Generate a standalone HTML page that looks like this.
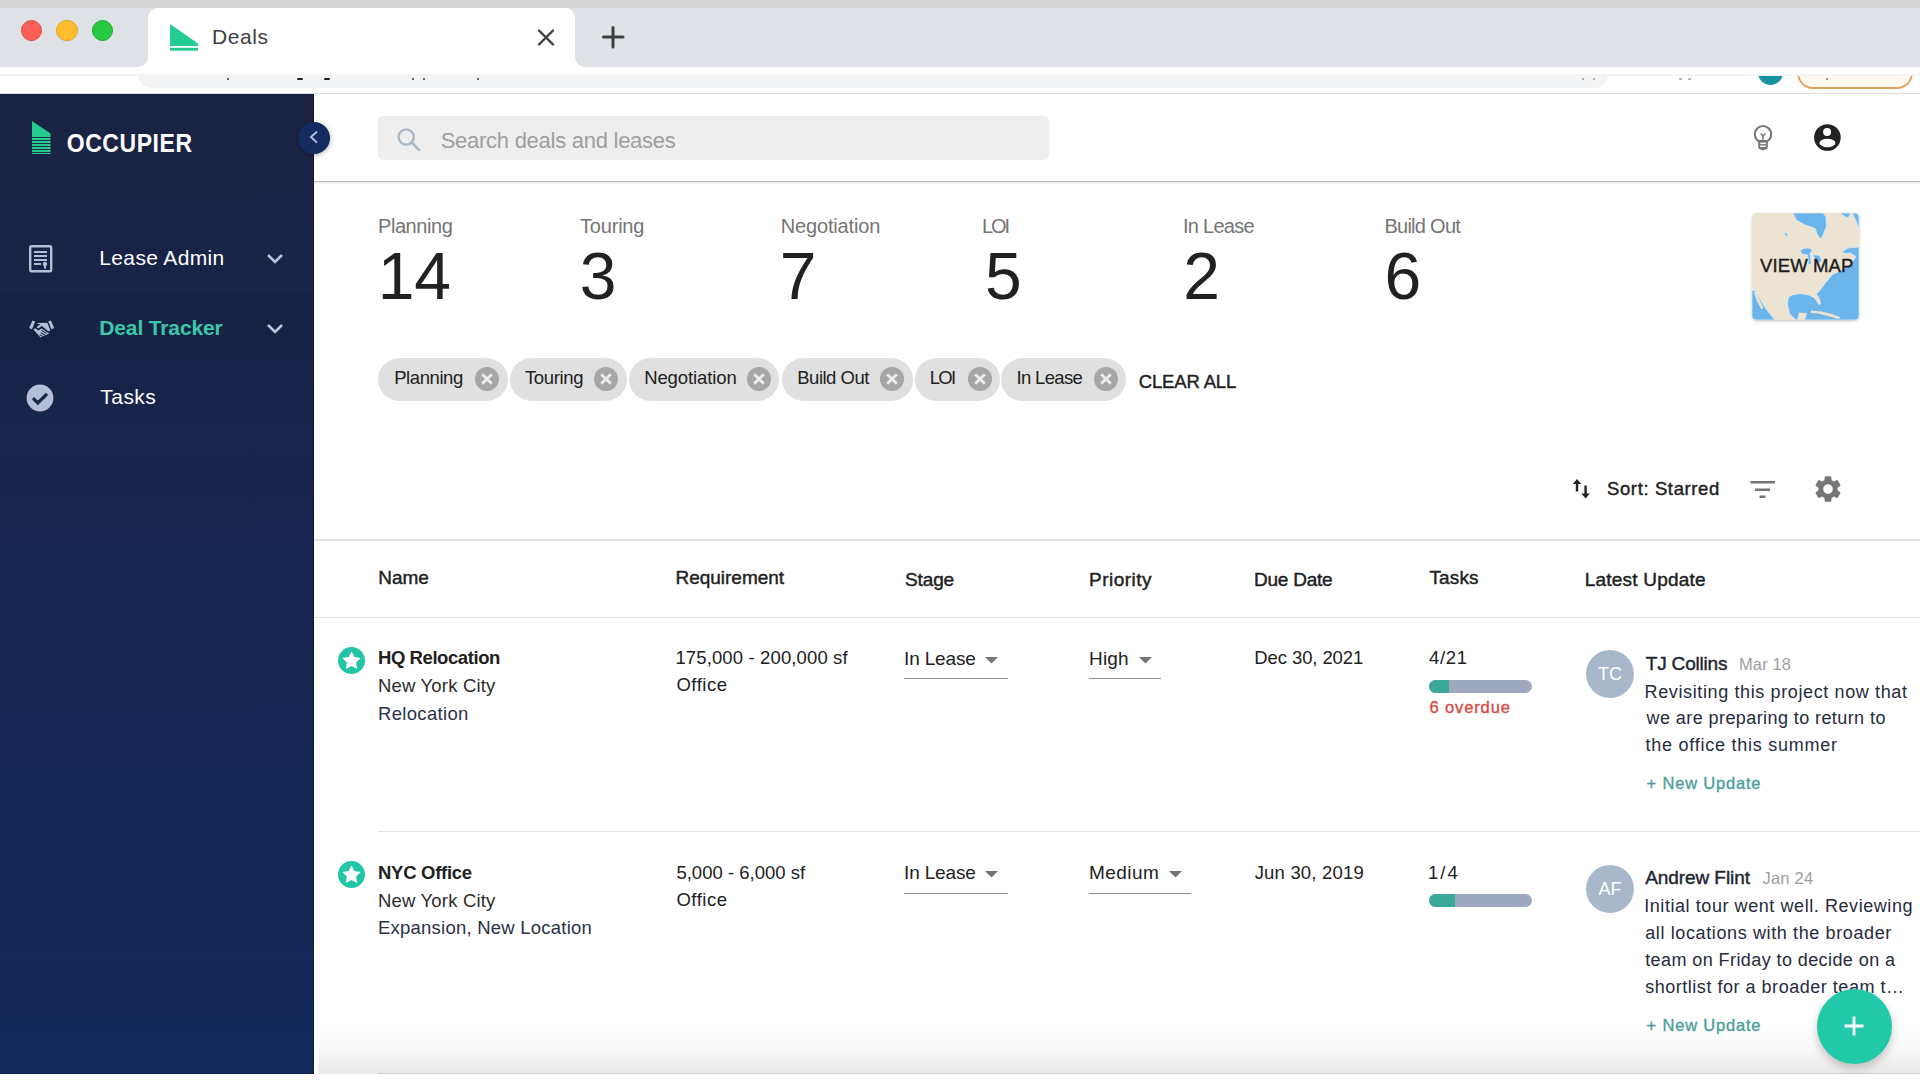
<!DOCTYPE html>
<html><head><meta charset="utf-8"><title>Deals</title>
<style>
html,body{margin:0;padding:0;width:1920px;height:1080px;overflow:hidden;background:#fff;}
body{position:relative;font-family:"Liberation Sans",sans-serif;}
.t{position:absolute;white-space:nowrap;line-height:1;}
</style></head><body>
<div style="position:absolute;left:0;top:0;width:1920px;height:8px;background:#d6d6d6"></div><div style="position:absolute;left:0;top:8px;width:1920px;height:59px;background:#dee1e6"></div><div style="position:absolute;left:148px;top:8px;width:427px;height:67px;background:#fff;border-radius:10px 10px 0 0"></div><div style="position:absolute;left:138px;top:57px;width:10px;height:10px;background:#fff"></div><div style="position:absolute;left:128px;top:47px;width:20px;height:20px;background:#dee1e6;border-radius:0 0 10px 0"></div><div style="position:absolute;left:575px;top:57px;width:10px;height:10px;background:#fff"></div><div style="position:absolute;left:575px;top:47px;width:20px;height:20px;background:#dee1e6;border-radius:0 0 0 10px"></div><div style="position:absolute;left:20.8px;top:20px;width:21.4px;height:21.4px;box-sizing:border-box;border:0.8px solid #e0443e;border-radius:50%;background:#fe5f57"></div><div style="position:absolute;left:56.3px;top:20px;width:21.4px;height:21.4px;box-sizing:border-box;border:0.8px solid #dea123;border-radius:50%;background:#febc2e"></div><div style="position:absolute;left:91.8px;top:20px;width:21.4px;height:21.4px;box-sizing:border-box;border:0.8px solid #1aab29;border-radius:50%;background:#28c840"></div><svg style="position:absolute;left:168px;top:22px" width="34" height="32" viewBox="0 0 34 32"><path d="M2 2 L2 24 L30 24 L30 21.6 Z" fill="#25cc92"/><rect x="2" y="25.8" width="28" height="2.9" fill="#25cc92"/></svg><div class="t " style="left:212.00px;top:26.22px;font-size:21px;color:#3c4043;font-weight:400;letter-spacing:0.578px;">Deals</div>
<svg style="position:absolute;left:536px;top:28px" width="20" height="20" viewBox="0 0 20 20"><path d="M3 2.5 L17 16.5 M17 2.5 L3 16.5" stroke="#3c4043" stroke-width="2.4" stroke-linecap="round"/></svg><svg style="position:absolute;left:600px;top:24px" width="26" height="26" viewBox="0 0 26 26"><path d="M13 3.5 L13 23 M3.5 13 L23 13" stroke="#3c4043" stroke-width="3" stroke-linecap="round"/></svg><div style="position:absolute;left:0;top:67px;width:1920px;height:28px;background:#fff"></div><div style="position:absolute;left:0;top:74px;width:1920px;height:2px;background:#f3f4f5"></div><div style="position:absolute;left:138px;top:60px;width:1470px;height:28px;background:#f1f3f4;border-radius:14px;clip-path:inset(15px 0 0 0)"></div><div style="position:absolute;left:1758px;top:60px;width:25px;height:25px;background:#16929e;border-radius:50%;clip-path:inset(16px 0 0 0)"></div><div style="position:absolute;left:1797px;top:55px;width:112px;height:30px;background:#fff9f0;border:2px solid #e3a25a;border-radius:16px;clip-path:inset(21px 0 0 0)"></div><div style="position:absolute;left:0;top:93px;width:1920px;height:1px;background:#dadce0"></div><div style="position:absolute;left:226.5px;top:77.5px;width:2px;height:2px;border-radius:1px;background:#333"></div><div style="position:absolute;left:297px;top:77.5px;width:6px;height:2px;border-radius:1px;background:#222"></div><div style="position:absolute;left:324px;top:77.5px;width:6px;height:2px;border-radius:1px;background:#222"></div><div style="position:absolute;left:412px;top:77.5px;width:2px;height:2px;border-radius:1px;background:#333"></div><div style="position:absolute;left:423px;top:77.5px;width:2px;height:2px;border-radius:1px;background:#333"></div><div style="position:absolute;left:477px;top:77.5px;width:2px;height:2px;border-radius:1px;background:#444"></div><div style="position:absolute;left:1582px;top:77.5px;width:2px;height:2px;border-radius:1px;background:#999"></div><div style="position:absolute;left:1593px;top:77.5px;width:2px;height:2px;border-radius:1px;background:#999"></div><div style="position:absolute;left:1679px;top:77.5px;width:3px;height:2px;border-radius:1px;background:#aaa"></div><div style="position:absolute;left:1688px;top:77.5px;width:3px;height:2px;border-radius:1px;background:#aaa"></div><div style="position:absolute;left:1826px;top:77.5px;width:2px;height:2px;border-radius:1px;background:#777"></div><div style="position:absolute;left:0;top:94px;width:314px;height:980px;background:linear-gradient(#1a2343,#12285b)"></div><div style="position:absolute;left:313px;top:94px;width:1px;height:980px;background:rgba(0,0,0,0.25)"></div><div style="position:absolute;left:0;top:291px;width:314px;height:69px;background:rgba(10,15,40,0.10)"></div><svg style="position:absolute;left:31px;top:120px" width="21" height="35" viewBox="0 0 21 35"><path d="M1 1 L1 34 L19.5 34 L19.5 13.5 Z" fill="#26c98e"/><rect x="0" y="17" width="21" height="0.9" fill="#1b2143"/><rect x="0" y="20" width="21" height="0.9" fill="#1b2143"/><rect x="0" y="23" width="21" height="0.9" fill="#1b2143"/><rect x="0" y="26" width="21" height="0.9" fill="#1b2143"/><rect x="0" y="29" width="21" height="0.9" fill="#1b2143"/><rect x="0" y="32" width="21" height="0.9" fill="#1b2143"/></svg><div class="t " style="left:66.70px;top:133.03px;font-size:23px;color:#ffffff;font-weight:700;letter-spacing:0.573px;transform:scaleY(1.16);transform-origin:0 19.47px;">OCCUPIER</div>
<div style="position:absolute;left:298px;top:121.5px;width:32px;height:32px;border-radius:50%;background:#132b60;box-shadow:0 1px 5px rgba(0,0,0,0.35)"></div><svg style="position:absolute;left:306px;top:129px" width="16" height="16" viewBox="0 0 16 16"><path d="M11 2.6 L5 8 L11 13.6" stroke="#b8c4e2" stroke-width="1.9" fill="none"/></svg><div class="t " style="left:99.30px;top:247.22px;font-size:21px;color:#ffffff;font-weight:400;letter-spacing:0.350px;">Lease Admin</div>
<div class="t " style="left:99.30px;top:316.92px;font-size:21px;color:#3cc8a8;font-weight:700;letter-spacing:-0.141px;">Deal Tracker</div>
<div class="t " style="left:100.30px;top:386.42px;font-size:21px;color:#ffffff;font-weight:400;letter-spacing:0.455px;">Tasks</div>
<svg style="position:absolute;left:265px;top:251px" width="20" height="16" viewBox="0 0 20 16"><path d="M3 4 L10 11 L17 4" stroke="#bcc4dc" stroke-width="2.6" fill="none"/></svg><svg style="position:absolute;left:265px;top:321px" width="20" height="16" viewBox="0 0 20 16"><path d="M3 4 L10 11 L17 4" stroke="#bcc4dc" stroke-width="2.6" fill="none"/></svg><svg style="position:absolute;left:28px;top:244px" width="26" height="30" viewBox="0 0 26 30"><rect x="2.2" y="2.2" width="21" height="25" rx="1.5" fill="none" stroke="#b4bed6" stroke-width="2.4"/><rect x="6" y="7" width="13" height="2" fill="#b4bed6"/><rect x="6" y="11" width="13" height="2" fill="#b4bed6"/><rect x="6" y="15" width="13" height="2" fill="#b4bed6"/><rect x="6" y="19" width="7" height="2" fill="#b4bed6"/><circle cx="17" cy="20" r="2.2" fill="#b4bed6"/><rect x="16" y="21" width="2" height="3.5" fill="#b4bed6"/></svg><svg style="position:absolute;left:24px;top:312px" width="36" height="32" viewBox="0 0 36 32"><g stroke="#b4bed6" stroke-width="3" stroke-linecap="butt"><path d="M9.8 9 L6.6 16.6"/><path d="M25.6 9 L28.8 16.6"/></g><g fill="#b4bed6"><path d="M12.3 11 L23.2 10.8 L26.4 18.2 L24.6 19.6 L17.8 14 L14.6 16.2 C13.6 16.6 12.6 15.6 13.2 14.6 L16.2 12.4 Z"/><path d="M9.4 17.6 L11.2 16.2 L14.4 18.6 L17.6 16.4 L25.2 21.4 L16.6 25.6 Z"/></g><path d="M17.6 18.4 L22.6 21.4 M16.8 20.6 L21 23.2 M15.8 22.6 L18.8 24.6" stroke="#1b2245" stroke-width="1.1"/></svg><svg style="position:absolute;left:26px;top:384px" width="28" height="28" viewBox="0 0 28 28"><circle cx="14" cy="14" r="13.4" fill="#b4bed6"/><path d="M7 14.2 L11.8 19 L21 9.8" stroke="#1b2346" stroke-width="3.2" fill="none"/></svg><div style="position:absolute;left:378px;top:116px;width:671px;height:44px;background:#eeeeee;border-radius:5px"></div><svg style="position:absolute;left:394px;top:125px" width="30" height="30" viewBox="0 0 30 30"><circle cx="12.2" cy="12" r="7.6" fill="none" stroke="#a9b9c6" stroke-width="2.4"/><path d="M17.8 17.6 L25 24.8" stroke="#a9b9c6" stroke-width="2.6" stroke-linecap="round"/></svg><div class="t " style="left:440.70px;top:129.68px;font-size:22px;color:#9e9e9e;font-weight:400;letter-spacing:-0.265px;">Search deals and leases</div>
<div style="position:absolute;left:314px;top:180.8px;width:1606px;height:1.6px;background:#bababa"></div><div style="position:absolute;left:314px;top:182.4px;width:1606px;height:3px;background:linear-gradient(#ececec,#fff)"></div><svg style="position:absolute;left:1750px;top:123px" width="26" height="30" viewBox="0 0 26 30"><circle cx="13" cy="11.2" r="8.2" fill="none" stroke="#777" stroke-width="2.1"/><path d="M8.2 17 L8.2 24 Q8.2 26 10.2 26.5 L13 27.6 L15.8 26.5 Q17.8 26 17.8 24 L17.8 17 Z" fill="#777"/><rect x="10.2" y="19.6" width="5.6" height="1.5" fill="#fff"/><rect x="10.2" y="22.5" width="5.6" height="1.5" fill="#fff"/><path d="M10.6 10.5 L13 13 L15.4 10.5 M13 13 L13 17.5" stroke="#777" stroke-width="1.5" fill="none"/></svg><svg style="position:absolute;left:1812px;top:122px" width="30" height="30" viewBox="0 0 30 30"><circle cx="15.4" cy="15.5" r="13.3" fill="#222"/><circle cx="15.1" cy="10" r="4" fill="#fff"/><ellipse cx="15.4" cy="21" rx="8" ry="4.2" fill="#fff"/></svg><div class="t " style="left:378.00px;top:216.07px;font-size:20px;color:#757575;font-weight:400;letter-spacing:-0.431px;">Planning</div>
<div class="t " style="left:377.70px;top:243.13px;font-size:66px;color:#212121;font-weight:400;letter-spacing:-0.106px;">14</div>
<div class="t " style="left:580.00px;top:216.07px;font-size:20px;color:#757575;font-weight:400;letter-spacing:-0.195px;">Touring</div>
<div class="t " style="left:579.70px;top:243.13px;font-size:66px;color:#212121;font-weight:400;">3</div>
<div class="t " style="left:780.70px;top:216.07px;font-size:20px;color:#757575;font-weight:400;letter-spacing:-0.146px;">Negotiation</div>
<div class="t " style="left:779.70px;top:243.13px;font-size:66px;color:#212121;font-weight:400;">7</div>
<div class="t " style="left:982.10px;top:216.07px;font-size:20px;color:#757575;font-weight:400;letter-spacing:-2.190px;">LOI</div>
<div class="t " style="left:985.00px;top:243.13px;font-size:66px;color:#212121;font-weight:400;">5</div>
<div class="t " style="left:1183.00px;top:216.07px;font-size:20px;color:#757575;font-weight:400;letter-spacing:-0.744px;">In Lease</div>
<div class="t " style="left:1183.20px;top:243.13px;font-size:66px;color:#212121;font-weight:400;">2</div>
<div class="t " style="left:1384.40px;top:216.07px;font-size:20px;color:#757575;font-weight:400;letter-spacing:-0.726px;">Build Out</div>
<div class="t " style="left:1384.40px;top:243.13px;font-size:66px;color:#212121;font-weight:400;">6</div>
<div id="map" style="position:absolute;left:1752px;top:213px;width:107px;height:107px;border-radius:5px;overflow:hidden;box-shadow:0 1px 3px rgba(0,0,0,0.25)"><svg width="107" height="107" viewBox="0 0 107 107" style="display:block"><rect width="107" height="107" fill="#ede3d3"/>
<g fill="#6bb5ea" stroke="#d6ebf7" stroke-width="0.8">
<path d="M41 0 L71 0 L74 3.7 L74.6 13 L71.5 21 L69 26 L65.4 22 L63 15.3 L52.7 11.8 L44.6 7.2 Z"/>
<path d="M88 0 L99 0 L96 5 L92 3 Z"/>
<path d="M100.5 0 L107 0 L107 15.3 L104 8 Z"/>
<ellipse cx="34" cy="21.5" rx="1.1" ry="2.4" transform="rotate(-25 34 21.5)"/>
<path d="M48 38 C51 34.5 57 34 60.5 37 L58 40.5 L59.5 52 L56.5 50.5 L55.5 42 L50 41 Z"/>
<path d="M61 41.5 L67.5 42.5 L70 48 L64.5 51 L62.5 46 Z"/>
<path d="M107 34 L96 35 L89.5 39 L94 40.5 L98 40 L104 43.5 L98 52.3 L90 57 L80.4 61.6 L73.5 69.7 L67.7 77.8 L64.2 81.2 L66.5 84 L68.9 90.5 L67.3 92 L62.5 85 L57 82 L48 80.5 L40 82 L36.5 84 L35.3 90.5 L37.6 100.9 L44 107 L107 107 Z"/>
<path d="M0 77 L3 77.5 L8 86 L14 96 L23 107 L0 107 Z"/>
</g>
<g fill="#ede3d3">
<path d="M59 97.5 L70 98.5 L80 101 L89 104.5 L86 106 L76 103 L66 100.5 L59 100 Z"/>
<path d="M47 99.5 L55 100 L53 107 L45 107 Z"/>
<path d="M1.5 78.5 L4 79.5 L11.5 95 L9.5 96.5 L5 88 Z"/>
</g>
</svg>
</div><div class="t " style="left:1760.00px;top:257.04px;font-size:18.5px;color:#1c1c1c;font-weight:400;-webkit-text-stroke:0.41px #1c1c1c;letter-spacing:0.119px;">VIEW MAP</div>
<div style="position:absolute;left:378.3px;top:357.5px;width:129.5px;height:43px;border-radius:22px;background:#e0e0e0"></div><div class="t " style="left:394.20px;top:369.34px;font-size:18.5px;color:#212121;font-weight:400;letter-spacing:-0.416px;">Planning</div>
<svg style="position:absolute;left:475px;top:366.9px" width="24" height="24" viewBox="0 0 24 24"><circle cx="12" cy="12" r="12" fill="#a6a6a6"/><path d="M7.2 7.2 L16.8 16.8 M16.8 7.2 L7.2 16.8" stroke="#ececec" stroke-width="2.8"/></svg><div style="position:absolute;left:509.6px;top:357.5px;width:117.39999999999998px;height:43px;border-radius:22px;background:#e0e0e0"></div><div class="t " style="left:524.90px;top:369.34px;font-size:18.5px;color:#212121;font-weight:400;letter-spacing:-0.331px;">Touring</div>
<svg style="position:absolute;left:594.3px;top:366.9px" width="24" height="24" viewBox="0 0 24 24"><circle cx="12" cy="12" r="12" fill="#a6a6a6"/><path d="M7.2 7.2 L16.8 16.8 M16.8 7.2 L7.2 16.8" stroke="#ececec" stroke-width="2.8"/></svg><div style="position:absolute;left:628.8px;top:357.5px;width:150.20000000000005px;height:43px;border-radius:22px;background:#e0e0e0"></div><div class="t " style="left:644.20px;top:369.34px;font-size:18.5px;color:#212121;font-weight:400;letter-spacing:-0.110px;">Negotiation</div>
<svg style="position:absolute;left:747px;top:366.9px" width="24" height="24" viewBox="0 0 24 24"><circle cx="12" cy="12" r="12" fill="#a6a6a6"/><path d="M7.2 7.2 L16.8 16.8 M16.8 7.2 L7.2 16.8" stroke="#ececec" stroke-width="2.8"/></svg><div style="position:absolute;left:781.75px;top:357.5px;width:131.25px;height:43px;border-radius:22px;background:#e0e0e0"></div><div class="t " style="left:797.25px;top:369.34px;font-size:18.5px;color:#212121;font-weight:400;letter-spacing:-0.494px;">Build Out</div>
<svg style="position:absolute;left:880px;top:366.9px" width="24" height="24" viewBox="0 0 24 24"><circle cx="12" cy="12" r="12" fill="#a6a6a6"/><path d="M7.2 7.2 L16.8 16.8 M16.8 7.2 L7.2 16.8" stroke="#ececec" stroke-width="2.8"/></svg><div style="position:absolute;left:914.5px;top:357.5px;width:85.0px;height:43px;border-radius:22px;background:#e0e0e0"></div><div class="t " style="left:929.75px;top:369.34px;font-size:18.5px;color:#212121;font-weight:400;letter-spacing:-1.714px;">LOI</div>
<svg style="position:absolute;left:967.5px;top:366.9px" width="24" height="24" viewBox="0 0 24 24"><circle cx="12" cy="12" r="12" fill="#a6a6a6"/><path d="M7.2 7.2 L16.8 16.8 M16.8 7.2 L7.2 16.8" stroke="#ececec" stroke-width="2.8"/></svg><div style="position:absolute;left:1001px;top:357.5px;width:125px;height:43px;border-radius:22px;background:#e0e0e0"></div><div class="t " style="left:1016.50px;top:369.34px;font-size:18.5px;color:#212121;font-weight:400;letter-spacing:-0.669px;">In Lease</div>
<svg style="position:absolute;left:1093.5px;top:366.9px" width="24" height="24" viewBox="0 0 24 24"><circle cx="12" cy="12" r="12" fill="#a6a6a6"/><path d="M7.2 7.2 L16.8 16.8 M16.8 7.2 L7.2 16.8" stroke="#ececec" stroke-width="2.8"/></svg><div class="t " style="left:1138.75px;top:373.09px;font-size:18.5px;color:#212121;font-weight:400;-webkit-text-stroke:0.41px #212121;letter-spacing:-0.151px;">CLEAR ALL</div>
<svg style="position:absolute;left:1572px;top:477px" width="20" height="24" viewBox="0 0 20 24"><path d="M5 2 L0.8 7 L3.8 7 L3.8 14.5 L6.2 14.5 L6.2 7 L9.2 7 Z" fill="#222"/><path d="M13.6 21.5 L9.4 16.5 L12.4 16.5 L12.4 8.5 L14.8 8.5 L14.8 16.5 L17.8 16.5 Z" fill="#222"/></svg><div class="t " style="left:1607.00px;top:480.24px;font-size:18.5px;color:#212121;font-weight:400;-webkit-text-stroke:0.41px #212121;letter-spacing:0.618px;">Sort: Starred</div>
<svg style="position:absolute;left:1749px;top:478px" width="28" height="22" viewBox="0 0 28 22"><rect x="1.5" y="3" width="24.5" height="2.5" fill="#757575"/><rect x="6" y="10.5" width="15" height="2.5" fill="#757575"/><rect x="10.5" y="17.5" width="6" height="2.5" fill="#757575"/></svg><svg style="position:absolute;left:1811.5px;top:473px" width="32" height="32" viewBox="0 0 24 24"><path fill="#757575" d="M19.14 12.94c.04-.3.06-.61.06-.94 0-.32-.02-.64-.07-.94l2.03-1.58a.49.49 0 0 0 .12-.61l-1.92-3.32a.488.488 0 0 0-.59-.22l-2.39.96c-.5-.38-1.03-.7-1.62-.94l-.36-2.54a.484.484 0 0 0-.48-.41h-3.84c-.24 0-.43.17-.47.41l-.36 2.54c-.59.24-1.13.57-1.62.94l-2.39-.96c-.22-.08-.47 0-.59.22L2.74 8.87c-.12.21-.08.47.12.61l2.03 1.58c-.05.3-.09.63-.09.94s.02.64.07.94l-2.03 1.58a.49.49 0 0 0-.12.61l1.92 3.32c.12.22.37.29.59.22l2.39-.96c.5.38 1.03.7 1.62.94l.36 2.54c.05.24.24.41.48.41h3.84c.24 0 .44-.17.47-.41l.36-2.54c.59-.24 1.13-.56 1.62-.94l2.39.96c.22.08.47 0 .59-.22l1.92-3.32c.12-.22.07-.47-.12-.61l-2.01-1.58zM12 15.6c-1.98 0-3.6-1.62-3.6-3.6s1.62-3.6 3.6-3.6 3.6 1.62 3.6 3.6-1.62 3.6-3.6 3.6z"/></svg><div style="position:absolute;left:314px;top:539px;width:1606px;height:1.5px;background:#e3e3e3"></div><div class="t " style="left:378.20px;top:568.32px;font-size:19px;color:#212121;font-weight:400;-webkit-text-stroke:0.42px #212121;letter-spacing:-0.005px;">Name</div>
<div class="t " style="left:675.50px;top:568.32px;font-size:19px;color:#212121;font-weight:400;-webkit-text-stroke:0.42px #212121;letter-spacing:-0.020px;">Requirement</div>
<div class="t " style="left:905.00px;top:569.72px;font-size:19px;color:#212121;font-weight:400;-webkit-text-stroke:0.42px #212121;letter-spacing:-0.121px;">Stage</div>
<div class="t " style="left:1089.00px;top:569.72px;font-size:19px;color:#212121;font-weight:400;-webkit-text-stroke:0.42px #212121;letter-spacing:0.484px;">Priority</div>
<div class="t " style="left:1254.00px;top:569.72px;font-size:19px;color:#212121;font-weight:400;-webkit-text-stroke:0.42px #212121;letter-spacing:-0.243px;">Due Date</div>
<div class="t " style="left:1429.50px;top:568.32px;font-size:19px;color:#212121;font-weight:400;-webkit-text-stroke:0.42px #212121;letter-spacing:0.108px;">Tasks</div>
<div class="t " style="left:1584.70px;top:569.72px;font-size:19px;color:#212121;font-weight:400;-webkit-text-stroke:0.42px #212121;letter-spacing:0.214px;">Latest Update</div>
<div style="position:absolute;left:314px;top:616.5px;width:1606px;height:1.5px;background:#e3e3e3"></div><svg style="position:absolute;left:337.5px;top:646.5px" width="27" height="27" viewBox="0 0 27 27"><circle cx="13.5" cy="13.5" r="13.5" fill="#22c5a5"/><path d="M13.5 4.3 L16.3 9.9 L22.6 11 L18.1 15.6 L19.2 21.9 L13.5 18.9 L7.8 21.9 L8.9 15.6 L4.4 11 L10.7 9.9 Z" fill="#fff"/></svg><div class="t " style="left:378.00px;top:649.34px;font-size:18.5px;color:#212121;font-weight:700;letter-spacing:-0.430px;">HQ Relocation</div>
<div class="t " style="left:378.00px;top:677.34px;font-size:18.5px;color:#2d2d2d;font-weight:400;letter-spacing:0.180px;">New York City</div>
<div class="t " style="left:378.00px;top:704.74px;font-size:18.5px;color:#2a3146;font-weight:400;letter-spacing:0.331px;">Relocation</div>
<div class="t " style="left:675.40px;top:649.34px;font-size:18.5px;color:#212121;font-weight:400;letter-spacing:0.133px;">175,000 - 200,000 sf</div>
<div class="t " style="left:676.40px;top:676.34px;font-size:18.5px;color:#212121;font-weight:400;letter-spacing:0.521px;">Office</div>
<div class="t " style="left:904.00px;top:648.52px;font-size:19px;color:#212121;font-weight:400;letter-spacing:-0.146px;">In Lease</div>
<svg style="position:absolute;left:985.3px;top:656.6px" width="13" height="7" viewBox="0 0 13 7"><path d="M0 0 L13 0 L6.5 6.5 Z" fill="#757575"/></svg><div style="position:absolute;left:904px;top:0;"></div><div style="position:absolute;left:904px;top:677.9px;width:103.79999999999995px;height:1.3px;background:#8d8d8d"></div><div class="t " style="left:1089.00px;top:648.52px;font-size:19px;color:#212121;font-weight:400;letter-spacing:0.164px;">High</div>
<svg style="position:absolute;left:1138.5px;top:656.6px" width="13" height="7" viewBox="0 0 13 7"><path d="M0 0 L13 0 L6.5 6.5 Z" fill="#757575"/></svg><div style="position:absolute;left:904px;top:0;"></div><div style="position:absolute;left:1089px;top:677.9px;width:71.59999999999991px;height:1.3px;background:#8d8d8d"></div><div class="t " style="left:1254.30px;top:649.34px;font-size:18.5px;color:#212121;font-weight:400;letter-spacing:-0.097px;">Dec 30, 2021</div>
<div class="t " style="left:1429.00px;top:649.34px;font-size:18.5px;color:#212121;font-weight:400;letter-spacing:0.661px;">4/21</div>
<div style="position:absolute;left:1428.8px;top:679.7px;width:103.2px;height:13px;border-radius:6.5px;background:#9ea8bf;overflow:hidden"><div style="width:20.200000000000045px;height:13px;background:#3aa99c"></div></div><div class="t " style="left:1429.50px;top:698.53px;font-size:16.5px;color:#d64b45;font-weight:400;-webkit-text-stroke:0.36px #d64b45;letter-spacing:0.874px;">6 overdue</div>
<div style="position:absolute;left:1586px;top:650px;width:48px;height:48px;border-radius:50%;background:#a9b7cb"></div><div class="t" style="left:1586px;width:48px;text-align:center;top:665.36px;font-size:18px;color:#fff">TC</div><div class="t " style="left:1645.80px;top:653.72px;font-size:19px;color:#1f2433;font-weight:400;-webkit-text-stroke:0.42px #1f2433;letter-spacing:-0.189px;">TJ Collins</div>
<div class="t " style="left:1739.00px;top:655.83px;font-size:16.5px;color:#9e9e9e;font-weight:400;letter-spacing:0.125px;">Mar 18</div>
<div class="t " style="left:1644.60px;top:682.56px;font-size:18px;color:#262b3b;font-weight:400;letter-spacing:0.622px;">Revisiting this project now that</div>
<div class="t " style="left:1646.60px;top:709.41px;font-size:18px;color:#262b3b;font-weight:400;letter-spacing:0.417px;">we are preparing to return to</div>
<div class="t " style="left:1645.60px;top:736.26px;font-size:18px;color:#262b3b;font-weight:400;letter-spacing:0.746px;">the office this summer</div>
<div class="t " style="left:1646.60px;top:775.03px;font-size:16.5px;color:#4b9f98;font-weight:400;-webkit-text-stroke:0.36px #4b9f98;letter-spacing:0.805px;">+ New Update</div>
<div style="position:absolute;left:378px;top:830.5px;width:1542px;height:1.5px;background:#e6e6e6"></div><svg style="position:absolute;left:337.5px;top:860.5px" width="27" height="27" viewBox="0 0 27 27"><circle cx="13.5" cy="13.5" r="13.5" fill="#22c5a5"/><path d="M13.5 4.3 L16.3 9.9 L22.6 11 L18.1 15.6 L19.2 21.9 L13.5 18.9 L7.8 21.9 L8.9 15.6 L4.4 11 L10.7 9.9 Z" fill="#fff"/></svg><div class="t " style="left:378.00px;top:864.04px;font-size:18.5px;color:#212121;font-weight:700;letter-spacing:-0.282px;">NYC Office</div>
<div class="t " style="left:378.00px;top:891.84px;font-size:18.5px;color:#2d2d2d;font-weight:400;letter-spacing:0.180px;">New York City</div>
<div class="t " style="left:378.00px;top:918.84px;font-size:18.5px;color:#2a3146;font-weight:400;letter-spacing:0.228px;">Expansion, New Location</div>
<div class="t " style="left:676.40px;top:864.04px;font-size:18.5px;color:#212121;font-weight:400;letter-spacing:0.012px;">5,000 - 6,000 sf</div>
<div class="t " style="left:676.40px;top:890.84px;font-size:18.5px;color:#212121;font-weight:400;letter-spacing:0.521px;">Office</div>
<div class="t " style="left:904.00px;top:863.22px;font-size:19px;color:#212121;font-weight:400;letter-spacing:-0.146px;">In Lease</div>
<svg style="position:absolute;left:985.3px;top:871.3px" width="13" height="7" viewBox="0 0 13 7"><path d="M0 0 L13 0 L6.5 6.5 Z" fill="#757575"/></svg><div style="position:absolute;left:904px;top:0;"></div><div style="position:absolute;left:904px;top:892.5999999999999px;width:103.79999999999995px;height:1.3px;background:#8d8d8d"></div><div class="t " style="left:1089.00px;top:863.22px;font-size:19px;color:#212121;font-weight:400;letter-spacing:0.450px;">Medium</div>
<svg style="position:absolute;left:1168.7px;top:871.3px" width="13" height="7" viewBox="0 0 13 7"><path d="M0 0 L13 0 L6.5 6.5 Z" fill="#757575"/></svg><div style="position:absolute;left:904px;top:0;"></div><div style="position:absolute;left:1089px;top:892.5999999999999px;width:102px;height:1.3px;background:#8d8d8d"></div><div class="t " style="left:1254.70px;top:864.04px;font-size:18.5px;color:#212121;font-weight:400;letter-spacing:0.183px;">Jun 30, 2019</div>
<div class="t " style="left:1428.00px;top:864.04px;font-size:18.5px;color:#212121;font-weight:400;letter-spacing:2.086px;">1/4</div>
<div style="position:absolute;left:1428.8px;top:894.2px;width:103.2px;height:13px;border-radius:6.5px;background:#9ea8bf;overflow:hidden"><div style="width:26.0px;height:13px;background:#3aa99c"></div></div><div style="position:absolute;left:1586px;top:864.8px;width:48px;height:48px;border-radius:50%;background:#a9b7cb"></div><div class="t" style="left:1586px;width:48px;text-align:center;top:880.16px;font-size:18px;color:#fff">AF</div><div class="t " style="left:1645.20px;top:867.92px;font-size:19px;color:#1f2433;font-weight:400;-webkit-text-stroke:0.42px #1f2433;letter-spacing:-0.074px;">Andrew Flint</div>
<div class="t " style="left:1762.40px;top:870.03px;font-size:16.5px;color:#9e9e9e;font-weight:400;letter-spacing:0.247px;">Jan 24</div>
<div class="t " style="left:1644.20px;top:897.16px;font-size:18px;color:#262b3b;font-weight:400;letter-spacing:0.569px;">Initial tour went well. Reviewing</div>
<div class="t " style="left:1645.20px;top:924.01px;font-size:18px;color:#262b3b;font-weight:400;letter-spacing:0.619px;">all locations with the broader</div>
<div class="t " style="left:1645.20px;top:950.86px;font-size:18px;color:#262b3b;font-weight:400;letter-spacing:0.417px;">team on Friday to decide on a</div>
<div class="t " style="left:1645.20px;top:977.71px;font-size:18px;color:#262b3b;font-weight:400;letter-spacing:0.523px;">shortlist for a broader team t…</div>
<div class="t " style="left:1646.60px;top:1017.03px;font-size:16.5px;color:#4b9f98;font-weight:400;-webkit-text-stroke:0.36px #4b9f98;letter-spacing:0.805px;">+ New Update</div>
<div style="position:absolute;left:318px;top:1026px;width:1602px;height:48px;background:linear-gradient(rgba(0,0,0,0) 0%,rgba(0,0,0,0.025) 45%,rgba(0,0,0,0.09) 100%)"></div><div style="position:absolute;left:378px;top:1072.5px;width:1542px;height:1.5px;background:#cfcfcf"></div><div style="position:absolute;left:0;top:1074.5px;width:1920px;height:6px;background:#fff"></div><div style="position:absolute;left:1816.5px;top:988.5px;width:75px;height:75px;border-radius:50%;background:#22c9a8;box-shadow:0 4px 10px rgba(0,0,0,0.22)"></div><svg style="position:absolute;left:1839px;top:1011px" width="30" height="30" viewBox="0 0 30 30"><path d="M15 5.5 L15 24.5 M5.5 15 L24.5 15" stroke="#fff" stroke-width="2.8"/></svg>
</body></html>
